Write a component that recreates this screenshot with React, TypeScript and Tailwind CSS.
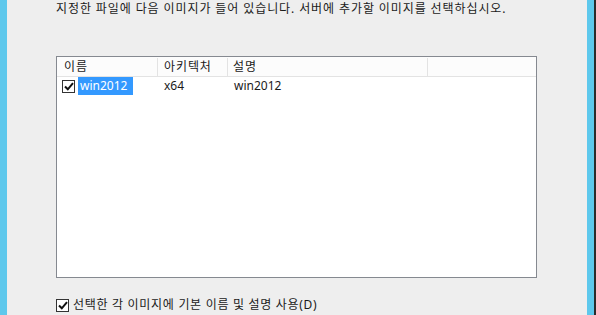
export default function App() {
  const font = { fontFamily: '"Noto Sans", "Noto Sans CJK KR", sans-serif' }

  const Check = ({ size = 13 }: { size?: number }) => (
    <span
      className="flex items-center justify-center border border-[#333] bg-white"
      style={{ width: size, height: size }}
    >
      <svg width="10" height="9" viewBox="0 0 10 9">
        <path d="M1 4.5 L3.8 7.3 L9 1.2" fill="none" stroke="#111" strokeWidth="2" />
      </svg>
    </span>
  )

  return (
    <div
      className="w-[596px] h-[315px] flex bg-[#eeeeee] text-[12px] text-[#1a1a1a] overflow-hidden"
      style={font}
    >
      <div className="w-[7px] bg-[#5ec8ec]" />
      <div className="flex-1 flex flex-col pl-[49px]">
        <div className="h-[20px] leading-[16px] pt-[1px] tracking-[0.9px]">
          지정한 파일에 다음 이미지가 들어 있습니다. 서버에 추가할 이미지를 선택하십시오.
        </div>
        <div className="mt-[36px] w-[481px] h-[222px] border border-[#858990] bg-white flex flex-col">
          <div className="h-[20px] flex bg-[#fcfcfc] border-b border-[#e3e3e3] pt-[1px] tracking-[0.9px]">
            <div className="w-[101px] pl-[7px] leading-[18px] border-r border-[#e3e3e3]">이름</div>
            <div className="w-[70px] pl-[6px] leading-[18px] border-r border-[#e3e3e3]">아키텍처</div>
            <div className="w-[200px] pl-[5px] leading-[18px] border-r border-[#e3e3e3]">설명</div>
            <div className="flex-1" />
          </div>
          <div className="h-[18px] flex items-center">
            <div className="w-[101px] flex items-center pl-[5px]">
              <Check />
              <span className="ml-[3px] px-[2px] h-[18px] w-[55px] leading-[18px] bg-[#3399ff] text-white">
                win2012
              </span>
            </div>
            <div className="w-[70px] pl-[6px]">x64</div>
            <div className="pl-[6px]">win2012</div>
          </div>
        </div>
        <div className="mt-[18px] flex items-center">
          <Check />
          <span className="ml-[4px] tracking-[0.7px]">선택한 각 이미지에 기본 이름 및 설명 사용(D)</span>
        </div>
      </div>
      <div className="w-[7px] bg-[#5ec8ec]" />
      <div className="w-[2px] bg-[#2b2b2b]" />
    </div>
  )
}
